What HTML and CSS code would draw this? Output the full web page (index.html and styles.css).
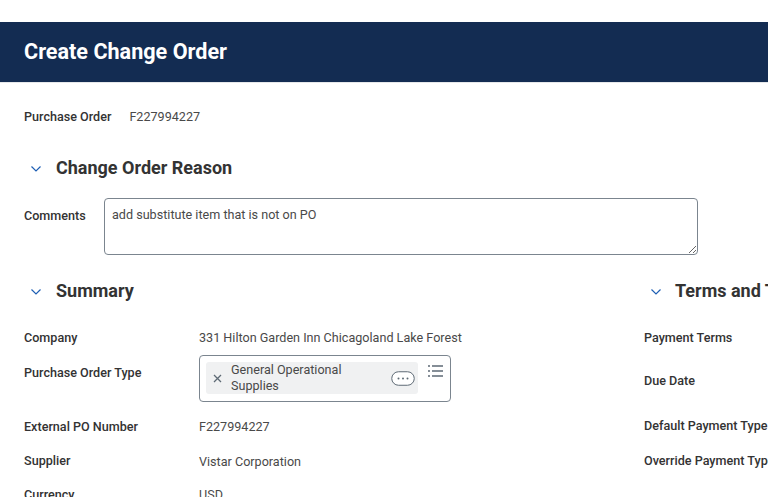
FILE: index.html
```html
<!DOCTYPE html>
<html>

<head>
    <link rel="stylesheet" href="styles.css">
</head>

<body>
    <header class="page-header">
        <h1>Create Change Order</h1>
    </header>

    <div class="content">
        <div class="po-line">
            <span class="label">Purchase Order</span>
            <span class="value">F227994227</span>
        </div>

        <h2 class="section-title">
            <svg class="chevron" width="12" height="8" viewBox="0 0 12 8"><path d="M1.5 1.5 6 6l4.500-4.500" /></svg>
            Change Order Reason
        </h2>

        <div class="comments-row">
            <label class="label" for="comments">Comments</label>
            <textarea id="comments" class="comments">add substitute item that is not on PO</textarea>
        </div>

        <div class="columns">
            <section class="col-left">
                <h2 class="section-title">
                    <svg class="chevron" width="12" height="8" viewBox="0 0 12 8"><path d="M1.5 1.5 6 6l4.500-4.500" /></svg>
                    Summary
                </h2>

                <div class="field field-company">
                    <span class="label">Company</span>
                    <span class="value">331 Hilton Garden Inn Chicagoland Lake Forest</span>
                </div>
                <div class="field field-type">
                    <span class="label">Purchase Order Type</span>
                    <div class="prompt">
                        <div class="pill">
                            <svg class="pill-x" width="9" height="9" viewBox="0 0 9 9"><path d="M1 1l7 7M8 1 1 8" /></svg>
                            <span class="pill-text">General Operational Supplies</span>
                            <svg class="pill-more" width="24" height="15" viewBox="0 0 24 15">
                                <rect x="0.750" y="0.750" width="22.500" height="13.500" rx="6.750" />
                                <circle cx="7.500" cy="7.500" r="1" />
                                <circle cx="12" cy="7.500" r="1" />
                                <circle cx="16.500" cy="7.500" r="1" />
                            </svg>
                        </div>
                        <svg class="list-icon" width="15" height="12" viewBox="0 0 15 12">
                            <path d="M0 1h2M4 1h11M0 6h2M4 6h11M0 11h2M4 11h11" />
                        </svg>
                    </div>
                </div>
                <div class="field field-po">
                    <span class="label">External PO Number</span>
                    <span class="value">F227994227</span>
                </div>
                <div class="field field-supplier">
                    <span class="label">Supplier</span>
                    <span class="value">Vistar Corporation</span>
                </div>
                <div class="field">
                    <span class="label">Currency</span>
                    <span class="value">USD</span>
                </div>
            </section>

            <section class="col-right">
                <h2 class="section-title">
                    <svg class="chevron" width="12" height="8" viewBox="0 0 12 8"><path d="M1.5 1.5 6 6l4.500-4.500" /></svg>
                    Terms and Tax
                </h2>
                <div class="term term-payment"><span class="label">Payment Terms</span></div>
                <div class="term term-due"><span class="label">Due Date</span></div>
                <div class="term term-default"><span class="label">Default Payment Type</span></div>
                <div class="term"><span class="label">Override Payment Type</span></div>
            </section>
        </div>
    </div>
</body>

</html>
```

FILE: styles.css
```css
html,
body {
    height: 497px;
    overflow: hidden;
}

body {
    margin: 0;
    padding-top: 22px;
    box-sizing: border-box;
    background-color: #fff;
    font-family: Roboto, Arial, sans-serif;
    font-size: 12.6px;
    color: #333e48;
}

.page-header {
    height: 60px;
    padding-left: 24px;
    display: flex;
    align-items: center;
    background-color: #132c52;
    border-bottom: 1px solid #e6e8ea;
    box-sizing: content-box;
}

h1 {
    margin: 0 0 2px;
    font-size: 21.6px;
    font-weight: 700;
    color: #fff;
}

.content {
    padding-left: 24px;
}

.label {
    font-weight: 500;
    color: #333;
}

.value {
    color: #494949;
}

.po-line {
    display: flex;
    gap: 18px;
    margin-top: 26px;
    line-height: 16px;
}

.section-title {
    display: flex;
    align-items: center;
    margin: 0;
    font-size: 18px;
    font-weight: 700;
    line-height: 24px;
    color: #333;
    white-space: nowrap;
}

.chevron {
    margin: 2px 14px 0 6px;
    fill: none;
    stroke: #1f5fb4;
    stroke-width: 1.2;
}

.content > .section-title {
    margin-top: 31px;
}

.comments-row {
    display: flex;
    margin-top: 18px;
}

.comments-row .label {
    width: 80px;
    margin-top: 10px;
}

.comments {
    width: 594px;
    height: 57px;
    padding: 8px 7px;
    box-sizing: border-box;
    border: 1px solid #7b858f;
    border-radius: 4px;
    font-family: inherit;
    font-size: 12.6px;
    color: #494949;
}

.columns {
    display: flex;
    margin-top: 24px;
}

.col-left {
    width: 620px;
    flex-shrink: 0;
}

.col-right {
    white-space: nowrap;
}

.col-right .section-title .chevron {
    margin-right: 13px;
}

.field {
    display: flex;
    line-height: 16px;
}

.field .label {
    width: 175px;
    flex-shrink: 0;
}

.field-company {
    margin-top: 27px;
}

.field-type {
    margin-top: 17px;
}

.field-type .label {
    margin-top: 2px;
}

.field-po {
    margin-top: 17px;
}

.field-supplier {
    margin-top: 19px;
}

.field-supplier .label {
    margin-top: -1px;
}

.field:last-child {
    margin-top: 17px;
}

.prompt {
    width: 252px;
    height: 47px;
    margin-top: -8px;
    padding: 6px;
    box-sizing: border-box;
    display: flex;
    gap: 10px;
    border: 1px solid #7b858f;
    border-radius: 4px;
}

.pill {
    width: 212px;
    height: 32px;
    padding-left: 7px;
    box-sizing: border-box;
    display: flex;
    align-items: center;
    flex-shrink: 0;
    background-color: #f0f1f2;
    border-radius: 3px;
}

.pill-x {
    flex-shrink: 0;
    fill: none;
    stroke: #5e6a75;
    stroke-width: 1.3;
}

.pill-text {
    width: 140px;
    margin-left: 9px;
    flex-shrink: 0;
    color: #494949;
}

.pill-more {
    margin-left: 20px;
    fill: #fff;
    stroke: #5e6a75;
    stroke-width: 1;
}

.pill-more circle {
    fill: #5e6a75;
    stroke: none;
}

.list-icon {
    margin-top: 3px;
    fill: none;
    stroke: #5e6a75;
    stroke-width: 1.3;
}

.term {
    line-height: 16px;
}

.term-payment {
    margin-top: 27px;
}

.term-due {
    margin-top: 27px;
}

.term-default {
    margin-top: 29px;
}

.term-default + .term {
    margin-top: 19px;
}
```
